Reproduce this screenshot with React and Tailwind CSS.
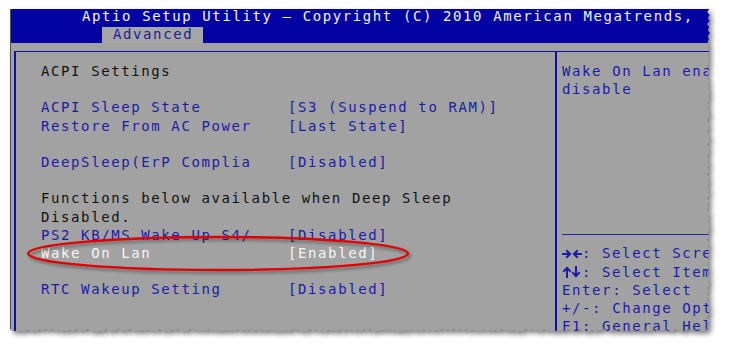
import React from 'react'

// container size of the captured BIOS picture
const W = 703
const H = 326

const rnd = (i) => {
  const r = Math.sin(i * 12.9898 + 78.233) * 43758.5453
  return r - Math.floor(r)
}

// torn paper edge along the right and the bottom
function tornPoints() {
  const pts = [[0, 0]]
  let i = 0
  for (let y = 0; y <= H - 4; y += 3) {
    const x = W - 3 - (i % 2 ? 1 + rnd(i) * 2.5 : rnd(i + 100) * 1.2)
    pts.push([x, y])
    i++
  }
  for (let x = W - 4; x >= 0; x -= 3) {
    const y = H - 3 - (i % 2 ? 1 + rnd(i) * 2.5 : rnd(i + 100) * 1.2)
    pts.push([x, y])
    i++
  }
  return pts
}

const PTS = tornPoints()
const POLY = PTS.map((p) => p.join(',')).join(' ')

const rows = [
  { label: 'ACPI Settings', tone: 'black' },
  {},
  { label: 'ACPI Sleep State', value: '[S3 (Suspend to RAM)]' },
  { label: 'Restore From AC Power', value: '[Last State]' },
  {},
  { label: 'DeepSleep(ErP Complia', value: '[Disabled]' },
  {},
  { label: 'Functions below available when Deep Sleep', tone: 'black' },
  { label: 'Disabled.', tone: 'black' },
  { label: 'PS2 KB/MS Wake Up S4/', value: '[Disabled]' },
  { label: 'Wake On Lan', value: '[Enabled]', tone: 'white' },
  {},
  { label: 'RTC Wakeup Setting', value: '[Disabled]' },
]

const toneClass = {
  black: 'text-[#121212]',
  white: 'text-[#f6f6f6]',
  blue: 'text-[#1b1ba8]',
}

function Row({ label, value, tone = 'blue' }) {
  if (!label) return <div className="h-[18.2px]" />
  return (
    <div className={`flex h-[18.2px] whitespace-nowrap ${toneClass[tone]}`}>
      <span className={value ? 'w-[247px] shrink-0' : ''}>{label}</span>
      {value && <span>{value}</span>}
    </div>
  )
}

// BIOS style arrow pairs
function LeftRight() {
  return (
    <svg width="20" height="12" viewBox="0 0 20 12" className="shrink-0">
      <g fill="none" stroke="currentColor" strokeWidth="2" strokeLinecap="square">
        <path d="M1 6h7M5 3l3 3-3 3" />
        <path d="M19 6h-7M15 3l-3 3 3 3" />
      </g>
    </svg>
  )
}

function UpDown() {
  return (
    <svg width="20" height="12" viewBox="0 0 20 12" className="shrink-0">
      <g fill="none" stroke="currentColor" strokeWidth="2" strokeLinecap="square">
        <path d="M5 11V2M2 5l3-3 3 3" />
        <path d="M14 1v9M11 7l3 3 3-3" />
      </g>
    </svg>
  )
}

export default function App() {
  return (
    <div className="relative w-[731px] h-[352px] overflow-hidden bg-white pl-[10px] pt-[9px]">
      {/* shadow + clip path for the torn picture */}
      <svg className="absolute inset-0" width="731" height="352">
        <defs>
          <clipPath id="torn" clipPathUnits="userSpaceOnUse">
            <polygon points={POLY} />
          </clipPath>
          <filter id="soft" x="-5%" y="-5%" width="110%" height="110%">
            <feGaussianBlur stdDeviation="2.6" />
          </filter>
        </defs>
        <polygon points={POLY} transform="translate(13 12)" fill="#000" opacity="0.5" filter="url(#soft)" />
      </svg>

      <div className="relative w-[703px] h-[326px] overflow-hidden bg-[#a2a2a2] border-l border-[#555] [clip-path:url(#torn)] font-['DejaVu_Sans_Mono',monospace] text-[14px] tracking-[1.6px] leading-[18.2px]">
        {/* header */}
        <div className="bg-[#0303a3]">
          <div className="h-[18px] pl-[71px] leading-[14px] text-[#f2f2f2] whitespace-nowrap">
            Aptio Setup Utility – Copyright (C) 2010 American Megatrends,
          </div>
          <div className="flex pl-[91px]">
            <div className="w-[101px] h-[16px] bg-[#a6a6a6] pl-[11px] leading-[15px] text-[#1c1c9e]">Advanced</div>
          </div>
        </div>
        <div className="h-[8px]" />

        {/* frame */}
        <div className="ml-[3px] h-[300px] flex border-t border-l-2 border-[#1010a8]">
          <div className="w-[539px] shrink-0 pl-[25px] pt-[10px]">
            {rows.map((r, i) => (
              <Row key={i} {...r} />
            ))}
          </div>
          <div className="flex-1 border-l-2 border-[#1010a8] pl-[5px] pt-[10px] text-[#1b1ba8] whitespace-nowrap">
            <div>Wake On Lan enable or</div>
            <div>disable</div>
            <div className="mt-[136px] border-t border-[#2323a8]" />
            <div className="pt-[9px]">
              <div className="flex items-center h-[18.2px]"><LeftRight /><span>: Select Screen</span></div>
              <div className="flex items-center h-[18.2px]"><UpDown /><span>: Select Item</span></div>
              <div>Enter: Select</div>
              <div>+/-: Change Opt.</div>
              <div>F1: General Help</div>
            </div>
          </div>
        </div>
      </div>

      {/* red annotation ellipse */}
      <svg className="absolute inset-0 pointer-events-none" width="731" height="352">
        <defs>
          <filter id="ringShadow" x="-10%" y="-50%" width="120%" height="200%">
            <feGaussianBlur stdDeviation="1.4" />
          </filter>
        </defs>
        <ellipse cx="220" cy="256" rx="190" ry="16.5" fill="none" stroke="#000" strokeOpacity="0.35" strokeWidth="2.5" filter="url(#ringShadow)" />
        <ellipse cx="218" cy="253.5" rx="190" ry="16.5" fill="none" stroke="#e40000" strokeWidth="2.4" />
      </svg>
    </div>
  )
}
